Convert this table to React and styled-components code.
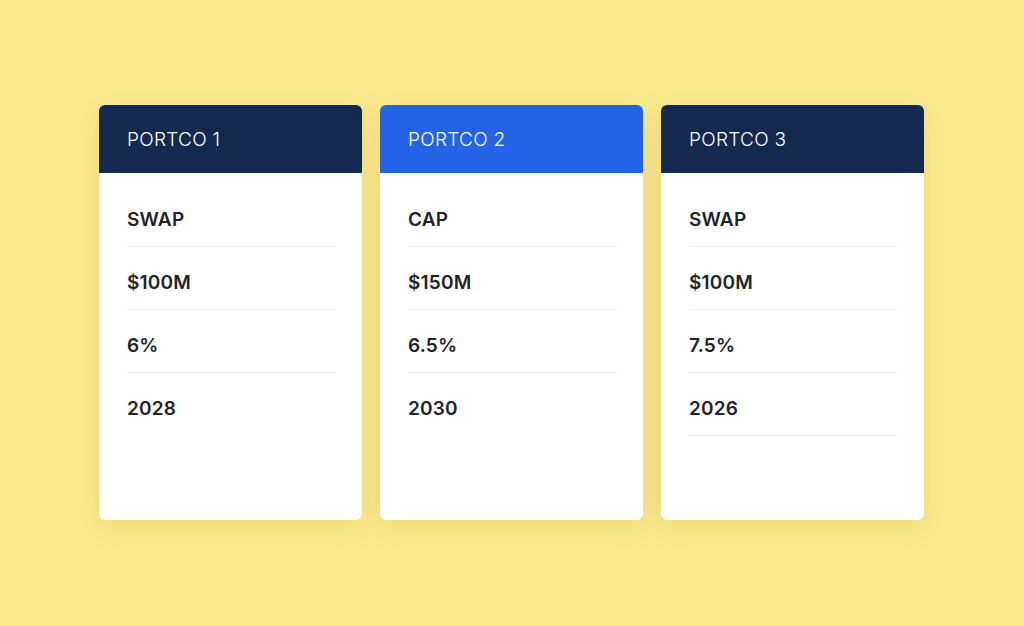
import styled, { createGlobalStyle } from 'styled-components';

const GlobalStyle = createGlobalStyle`
  html, body {
    margin: 0;
    padding: 0;
    background: #fae98f;
  }
  body {
    font-family: 'Inter', 'Noto Sans', sans-serif;
  }
`;

const Page = styled.div`
  width: 1024px;
  height: 626px;
  display: flex;
  align-items: flex-start;
  gap: 18px;
  padding: 105px 0 0 99px;
  box-sizing: border-box;
  background: #fae98f;
`;

const Card = styled.div`
  width: 263px;
  height: 415px;
  background: #ffffff;
  border-radius: 6px;
  overflow: hidden;
  box-shadow: 0 6px 24px rgba(190, 160, 40, 0.22);
  display: flex;
  flex-direction: column;
`;

const Header = styled.div`
  height: 68px;
  background: ${(p) => (p.$active ? '#2563e6' : '#13294f')};
  color: #ffffff;
  display: flex;
  align-items: center;
  padding: 0 28px;
  font-size: 19px;
  font-weight: 300;
  letter-spacing: 0.3px;
`;

const Body = styled.div`
  padding: 11px 26px 0 28px;
  display: flex;
  flex-direction: column;
`;

const Row = styled.div`
  padding: 25px 0 15px;
  line-height: 22px;
  font-size: 19px;
  font-weight: 600;
  letter-spacing: 0.2px;
  color: #222326;
  border-bottom: 1px solid ${(p) => (p.$noLine ? 'transparent' : '#f0f0f0')};
`;

const portcos = [
  { name: 'PORTCO 1', rows: ['SWAP', '$100M', '6%', '2028'], lastLine: false },
  { name: 'PORTCO 2', rows: ['CAP', '$150M', '6.5%', '2030'], active: true, lastLine: false },
  { name: 'PORTCO 3', rows: ['SWAP', '$100M', '7.5%', '2026'], lastLine: true },
];

const App = () => {
  return (
    <>
      <GlobalStyle />
      <Page>
        {portcos.map((p) => (
          <Card key={p.name}>
            <Header $active={p.active}>{p.name}</Header>
            <Body>
              {p.rows.map((r, i) => (
                <Row key={r} $noLine={i === p.rows.length - 1 && !p.lastLine}>
                  {r}
                </Row>
              ))}
            </Body>
          </Card>
        ))}
      </Page>
    </>
  );
};

export default App;
